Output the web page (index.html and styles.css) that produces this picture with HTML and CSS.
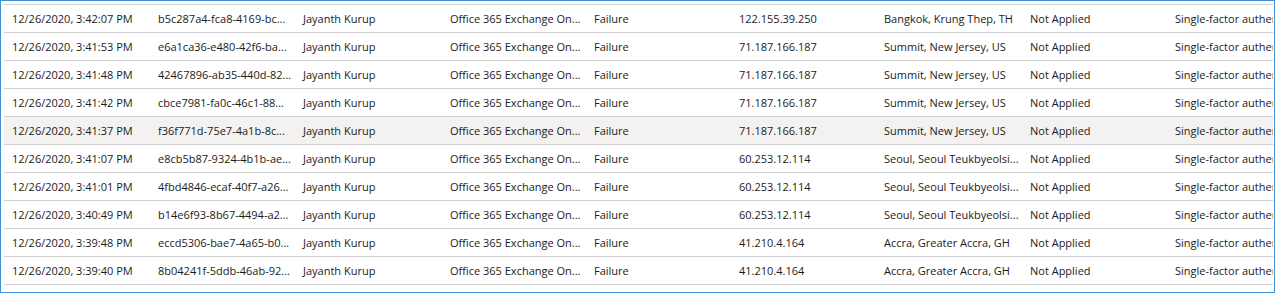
FILE: index.html
```html
<!DOCTYPE html>
<html>
<head>
<meta charset="utf-8">
<link rel="stylesheet" href="styles.css">
</head>
<body>
<div class="frame">
  <div class="grid">
    <div class="row"><span>12/26/2020, 3:42:07 PM</span><span>b5c287a4-fca8-4169-bc...</span><span>Jayanth Kurup</span><span>Office 365 Exchange On...</span><span>Failure</span><span>122.155.39.250</span><span>Bangkok, Krung Thep, TH</span><span>Not Applied</span><span>Single-factor authentication</span></div>
    <div class="row"><span>12/26/2020, 3:41:53 PM</span><span>e6a1ca36-e480-42f6-ba...</span><span>Jayanth Kurup</span><span>Office 365 Exchange On...</span><span>Failure</span><span>71.187.166.187</span><span>Summit, New Jersey, US</span><span>Not Applied</span><span>Single-factor authentication</span></div>
    <div class="row"><span>12/26/2020, 3:41:48 PM</span><span>42467896-ab35-440d-82...</span><span>Jayanth Kurup</span><span>Office 365 Exchange On...</span><span>Failure</span><span>71.187.166.187</span><span>Summit, New Jersey, US</span><span>Not Applied</span><span>Single-factor authentication</span></div>
    <div class="row"><span>12/26/2020, 3:41:42 PM</span><span>cbce7981-fa0c-46c1-88...</span><span>Jayanth Kurup</span><span>Office 365 Exchange On...</span><span>Failure</span><span>71.187.166.187</span><span>Summit, New Jersey, US</span><span>Not Applied</span><span>Single-factor authentication</span></div>
    <div class="row hover"><span>12/26/2020, 3:41:37 PM</span><span>f36f771d-75e7-4a1b-8c...</span><span>Jayanth Kurup</span><span>Office 365 Exchange On...</span><span>Failure</span><span>71.187.166.187</span><span>Summit, New Jersey, US</span><span>Not Applied</span><span>Single-factor authentication</span></div>
    <div class="row"><span>12/26/2020, 3:41:07 PM</span><span>e8cb5b87-9324-4b1b-ae...</span><span>Jayanth Kurup</span><span>Office 365 Exchange On...</span><span>Failure</span><span>60.253.12.114</span><span>Seoul, Seoul Teukbyeolsi...</span><span>Not Applied</span><span>Single-factor authentication</span></div>
    <div class="row"><span>12/26/2020, 3:41:01 PM</span><span>4fbd4846-ecaf-40f7-a26...</span><span>Jayanth Kurup</span><span>Office 365 Exchange On...</span><span>Failure</span><span>60.253.12.114</span><span>Seoul, Seoul Teukbyeolsi...</span><span>Not Applied</span><span>Single-factor authentication</span></div>
    <div class="row"><span>12/26/2020, 3:40:49 PM</span><span>b14e6f93-8b67-4494-a2...</span><span>Jayanth Kurup</span><span>Office 365 Exchange On...</span><span>Failure</span><span>60.253.12.114</span><span>Seoul, Seoul Teukbyeolsi...</span><span>Not Applied</span><span>Single-factor authentication</span></div>
    <div class="row"><span>12/26/2020, 3:39:48 PM</span><span>eccd5306-bae7-4a65-b0...</span><span>Jayanth Kurup</span><span>Office 365 Exchange On...</span><span>Failure</span><span>41.210.4.164</span><span>Accra, Greater Accra, GH</span><span>Not Applied</span><span>Single-factor authentication</span></div>
    <div class="row"><span>12/26/2020, 3:39:40 PM</span><span>8b04241f-5ddb-46ab-92...</span><span>Jayanth Kurup</span><span>Office 365 Exchange On...</span><span>Failure</span><span>41.210.4.164</span><span>Accra, Greater Accra, GH</span><span>Not Applied</span><span>Single-factor authentication</span></div>
  </div>
</div>
</body>
</html>
```
FILE: styles.css
```css
html, body {
  margin: 0;
  padding: 0;
  background: #ffffff;
}
.frame {
  box-sizing: border-box;
  width: 1275px;
  height: 293px;
  border: 1px solid #3f8fdc;
  padding: 3px 1px 0 3px;
  overflow: hidden;
  background: #ffffff;
}
.grid {
  border-top: 1px solid #cfcfcf;
  display: flex;
  flex-direction: column;
}
.row {
  display: grid;
  grid-template-columns: 146px 145px 147px 144px 145px 145px 146px 145px 145px;
  height: 27px;
  border-bottom: 1px solid #cfcfcf;
  align-items: center;
  font-family: "Open Sans", sans-serif;
  font-size: 11px;
  color: #1b1b1b;
  overflow: hidden;
}
.row.hover {
  background: #f3f2f1;
}
.row span {
  padding-left: 8px;
  white-space: nowrap;
  overflow: hidden;
}
```
